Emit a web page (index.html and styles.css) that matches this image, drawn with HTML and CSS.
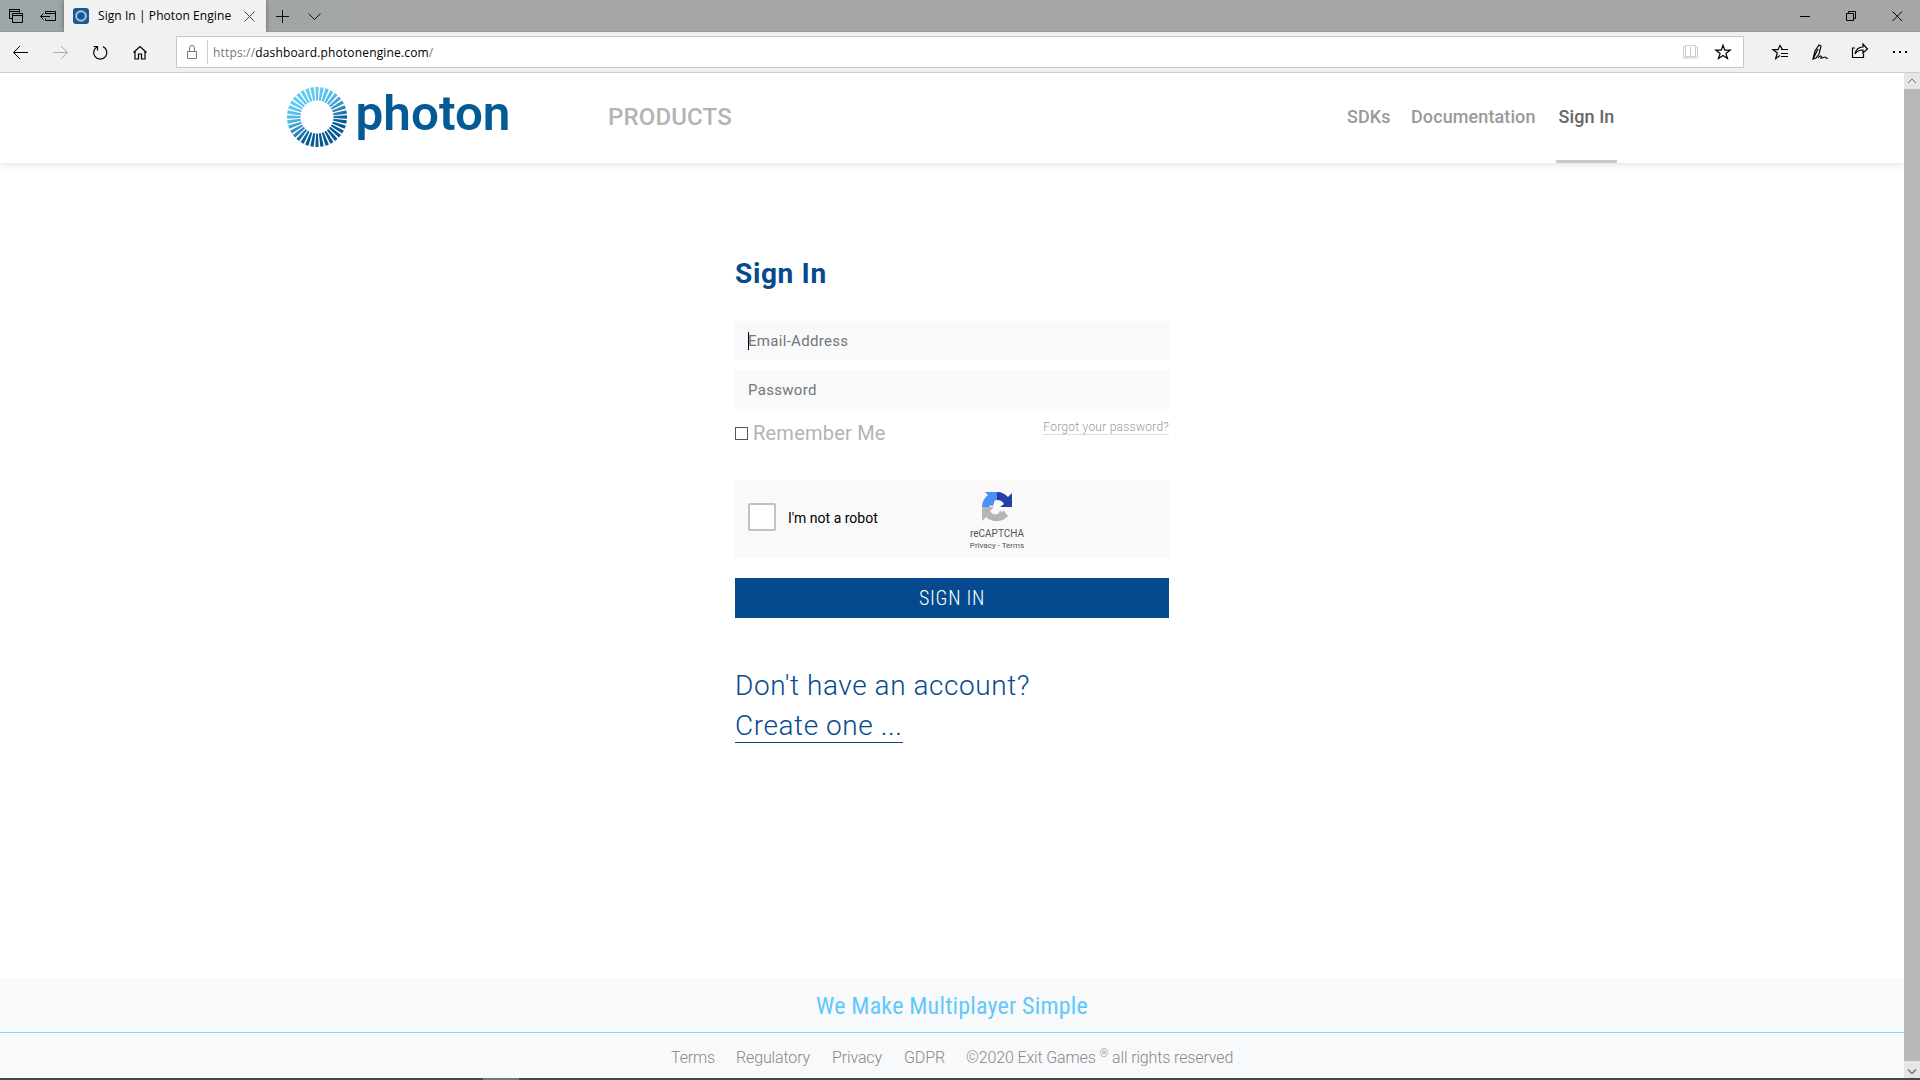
FILE: index.html
```html
<!DOCTYPE html>
<html lang="en">
<head>
<meta charset="utf-8">
<title>Sign In | Photon Engine</title>
<link rel="stylesheet" href="styles.css">
</head>
<body>
<div class="tabstrip">
  <svg class="strip-left" width="64" height="32" fill="none" stroke="#000"><path d="M12 18.500h-2.500v-9h10v3M9.500 11.500h10M12.500 13.500h10v9h-10zM12.500 15.500h10"/><path d="M45.500 14v-2.500h10v9h-10v-2M45.500 13.500h10M41 16.500h9M43.500 13.500l-3 3 3 3"/></svg>
  <div class="tab">
    <svg width="16" height="16"><rect width="16" height="16" rx="3" fill="#1a5799"/><circle cx="8" cy="8" r="4.800" fill="none" stroke="#a9c5e4" stroke-width="2"/></svg>
    <span class="tab-title">Sign In | Photon Engine</span>
    <svg class="tab-close" width="11" height="11" fill="none" stroke="#444"><path d="M.5.5l10 10M10.500.5l-10 10"/></svg>
  </div>
  <svg width="66" height="32" fill="none" stroke="#111"><path d="M10 16.500h13M16.500 10v13M42.500 13.500l6 6 6-6"/></svg>
  <svg class="window-buttons" width="130" height="32" fill="none" stroke="#000"><path d="M10 16.500h10M56.500 13.500h7v7h-7zM58.500 13.500v-2h7v7h-2M102.500 11.500l9.500 9.500M112 11.500l-9.500 9.500"/></svg>
</div>
<div class="toolbar">
  <svg width="176" height="40" fill="none" stroke="#000"><path d="M14 20.500h14M20 14l-6.500 6.500L20 27"/><path stroke="#aaa" d="M53 20.500h14M61 14l6.500 6.500L61 27"/><path stroke-width="1.200" d="M93.500 14.500h4v4M103 14.600a6.600 6.600 0 1 1-5.500 0"/><path stroke-width="1.200" d="M133.500 20.500l6.500-6 6.500 6M135 19.500v7.500h3.500v-5h3v5h3.500v-7.500"/></svg>
  <div class="address">
    <svg width="30" height="30" fill="none" stroke="#777"><path d="M10.500 14.500h9v7h-9zM12.500 14v-3a2.500 2.500 0 0 1 5 0v3"/></svg>
    <span class="address-url">https://<b>dashboard.photonengine.com</b>/</span>
    <svg class="address-icons" width="62" height="30" fill="none"><path stroke="#ccc" d="M1.500 9.500h2v11h-2zM3.500 8.500h4l1 1 1-1h4v11h-4l-1 1-1-1h-4zM8.500 10v11M13.500 10h2v11h-14v-1"/><path stroke="#000" stroke-width="1.200" d="M41 8.200l1.700 4.900h5.500l-4.300 3.300 1.600 5.200-4.500-3.200-4.500 3.200 1.600-5.200-4.300-3.300h5.500z"/></svg>
  </div>
  <svg width="176" height="40" fill="none" stroke="#000"><path stroke-width="1.200" d="M43.500 17.500h-5l-2.500-4-2 4.200h-5l4.300 3.300-1.600 5.500 4.300-3M37 17.500h7M37 21.500h7M37 24.500h7"/><path stroke-width="1.200" d="M69 27l2-8 4-6 2 1-2 8-3 4-3 1zM69 27l5-10M74 26c3-4 4-1 3 0s3-1 4-1 0 2 3 1"/><path stroke-width="1.200" d="M111 16h-2.500v9.500h11v-4M111 22c1-5 4-7 8-7v-3l4.500 5-4.500 4v-3c-4 0-6 1-8 4z"/><path fill="#000" stroke="none" d="M149 19h2v2h-2zM155 19h2v2h-2zM161 19h2v2h-2z"/></svg>
</div>
<div class="viewport">
  <div class="page">
    <header class="site-header">
      <svg class="logo" width="230" height="90">
        <defs><linearGradient id="ring" x1=".2" y1="0" x2=".75" y2="1"><stop offset=".1" stop-color="#5ccbf5"/><stop offset=".35" stop-color="#4fb5e2"/><stop offset=".8" stop-color="#045a94"/></linearGradient></defs>
        <circle cx="31" cy="44" r="23.250" fill="none" stroke="url(#ring)" stroke-width="13.500" pathLength="360" stroke-dasharray="6.600 3.400" stroke-dashoffset="3.300"/>
        <text class="wordmark" x="69.500" y="57" textLength="155" lengthAdjust="spacingAndGlyphs">photon</text>
      </svg>
      <a class="products">PRODUCTS</a>
      <nav class="site-nav"><a class="sdks">SDKs</a><a class="docs">Documentation</a><a class="current">Sign In</a></nav>
    </header>
    <main class="signin">
      <h1>Sign In</h1>
      <div class="field field-focus">Email-Address</div>
      <div class="field">Password</div>
      <div class="options">
        <span class="checkbox"></span><span class="remember">Remember Me</span>
        <a class="forgot">Forgot your password?</a>
      </div>
      <div class="captcha">
        <span class="captcha-box"></span>
        <span class="captcha-label">I'm not a robot</span>
        <div class="captcha-brand">
          <svg width="30" height="30" viewBox="0 0 30 30"><path fill="#4a90f5" d="M15 0H3l3 3A15 15 0 0 0 0 15h8q0-2-2-2l5 1 1-3q0-3 3-3z"/><path fill="#2340a8" d="M15 0c5 0 8 2 11 5l4-4v14H18l4-3q-2-4-7-4z"/><path fill="#b5b5b5" d="M0 15h12l-4 4q4 6 9 2l1-3 2 3 1-3 5 6A15 15 0 0 1 4 25l-4 4z"/></svg>
          <span class="brand-name">reCAPTCHA</span>
          <span class="brand-links">Privacy - Terms</span>
        </div>
      </div>
      <div class="submit"><span>SIGN IN</span></div>
      <div class="register">Don't have an account?<br><a>Create one ...</a></div>
    </main>
    <footer class="site-footer">
      <div class="tagline"><span>We Make Multiplayer Simple</span></div>
      <div class="legal"><a class="terms">Terms</a><a class="regulatory">Regulatory</a><a class="privacy">Privacy</a><a class="gdpr">GDPR</a><span>©2020 Exit Games <sup>®</sup> all rights reserved</span></div>
    </footer>
  </div>
  <div class="scrollbar">
    <svg width="16" height="16" fill="none" stroke="#777"><path d="M4 10l4-4 4 4"/></svg>
    <div class="thumb"></div>
    <svg width="16" height="17" fill="none" stroke="#777" stroke-width="1.500"><path d="M4 8.500l4 4 4-4"/></svg>
  </div>
</div>
<div class="taskbar"><div class="taskbar-active"></div></div>
</body>
</html>
```
FILE: styles.css
```css
* { box-sizing: border-box; }
body { margin: 0; width: 1920px; height: 1080px; overflow: hidden; display: flex; flex-direction: column; background: #fff; font-family: Roboto, sans-serif; }
svg { display: block; flex: none; }
span, a { white-space: nowrap; }

.tabstrip { height: 32px; flex: none; display: flex; background: linear-gradient(90deg, #9aa6a9 0, #a2a6a7 260px, #a6a6a6 500px); box-shadow: inset 0 -1px #999; }
.tab { width: 202px; height: 32px; background: #f1f1f1; display: flex; align-items: center; padding-left: 9px; box-shadow: 0 0 5px rgba(0,0,0,.4); clip-path: inset(0 -6px 0 -6px); }
.tab-title { margin-left: 9px; width: 134px; font: 12px/16px "Open Sans", sans-serif; color: #000; margin-top: -1px; letter-spacing: .07px; }
.tab-close { margin-left: 12px; }
.window-buttons { margin-left: auto; }

.toolbar { height: 41px; flex: none; display: flex; background: #f1f1f1; border-bottom: 1px solid #ccc; }
.address { width: 1568px; height: 32px; margin-top: 4px; background: #fff; border: 1px solid #c8c8c8; display: flex; }
.address-url { border-left: 1px solid #ccc; margin: 3px 0; padding-left: 5px; font: 12px/26px "Open Sans", sans-serif; height: 24px; color: #777; letter-spacing: .16px; }
.address-url b { font-weight: 400; color: #000; }
.address-icons { margin-left: auto; margin-right: -1px; }

.viewport { flex: 1; display: flex; min-height: 0; }
.page { width: 1904px; display: flex; flex-direction: column; }
.site-header { height: 90px; flex: none; display: flex; padding-left: 286px; box-shadow: 0 1px 8px rgba(0,0,0,.12); clip-path: inset(0 0 -12px 0); }
.wordmark { font: 600 49px Roboto, sans-serif; fill: #045a94; }
.products { margin-left: 92px; font: 500 24px/88px Roboto, sans-serif; color: #b4b4b4; width: 739px; letter-spacing: .15px; }
.site-nav { display: flex; font: 500 18px/88px Roboto, sans-serif; color: #999; letter-spacing: .1px; }
.sdks { width: 64px; }
.docs { width: 145px; }
.current { color: #666; width: 61px; text-align: center; box-shadow: inset 0 -3px #c8c9ca; }

.signin { width: 434px; margin-left: 735px; flex: 1; color: #054a8f; }
.signin h1 { margin: 92px 0 0; height: 66px; font: 700 28px/38px Roboto, sans-serif; letter-spacing: .65px; }
.field { height: 39px; margin-bottom: 10px; background: #f8f9fb; padding-left: 13px; font: 15px/41px Roboto, sans-serif; color: #757575; letter-spacing: .3px; }
.field-focus { background: linear-gradient(#000, #000) 13px 11px / 1px 18px no-repeat #f8f9fb; }
.options { height: 61px; display: flex; color: #b3b3b3; }
.checkbox { width: 13px; height: 13px; border: 1px solid #555; margin-top: 8px; }
.remember { margin-left: 5px; font: 20px/28px Roboto, sans-serif; letter-spacing: .22px; }
.forgot { margin-left: auto; height: 16px; font: 300 12px/17px Roboto, sans-serif; border-bottom: 1px solid #ddd; letter-spacing: .25px; color: #999; }
.captcha { height: 78px; background: #f9f9f9; display: flex; padding-left: 13px; }
.captcha-box { width: 28px; height: 28px; margin-top: 23px; border: 2px solid #c1c1c1; border-radius: 2px; background: #fff; }
.captcha-label { margin-left: 12px; width: 182px; font: 14px/76px Roboto, sans-serif; color: #000; }
.captcha-brand { width: 54px; padding-top: 12px; display: flex; flex-direction: column; align-items: center; color: #555; }
.brand-name { font: 10px/12px Roboto, sans-serif; margin-top: 6px; }
.brand-links { font: 8px/12px Roboto, sans-serif; }
.submit { height: 40px; margin-top: 20px; background: #054a8f; color: #fff; text-align: center; font: 300 20px/40px Roboto, sans-serif; font-stretch: 75%; letter-spacing: .7px; }
.register { margin-top: 48px; font: 300 28px/40px Roboto, sans-serif; letter-spacing: .56px; }
.register a { display: inline-block; height: 37px; border-bottom: 1px solid #054a8f; }

.site-footer { height: 100px; flex: none; background: #f8f9fb; color: #999; }
.tagline { height: 55px; border-bottom: 1px solid #85d6fa; text-align: center; font: 24px/57px Roboto, sans-serif; font-stretch: 75%; color: #62c8fb; letter-spacing: .2px; }
.legal { display: flex; padding-left: 671px; font: 300 16px/49px Roboto, sans-serif; color: #888; letter-spacing: -.13px; }
.legal sup { font-size: 11px; line-height: 0; }
.terms { width: 65px; }
.regulatory { width: 96px; }
.privacy { width: 72px; }
.gdpr { width: 62px; }

.scrollbar { width: 16px; background: #e6e6e6; display: flex; flex-direction: column; }
.thumb { flex: 1; background: #b8b8b8; }
.taskbar { height: 2px; flex: none; background: #464646; padding-left: 483px; }
.taskbar-active { width: 36px; height: 2px; background: #777; }
```
